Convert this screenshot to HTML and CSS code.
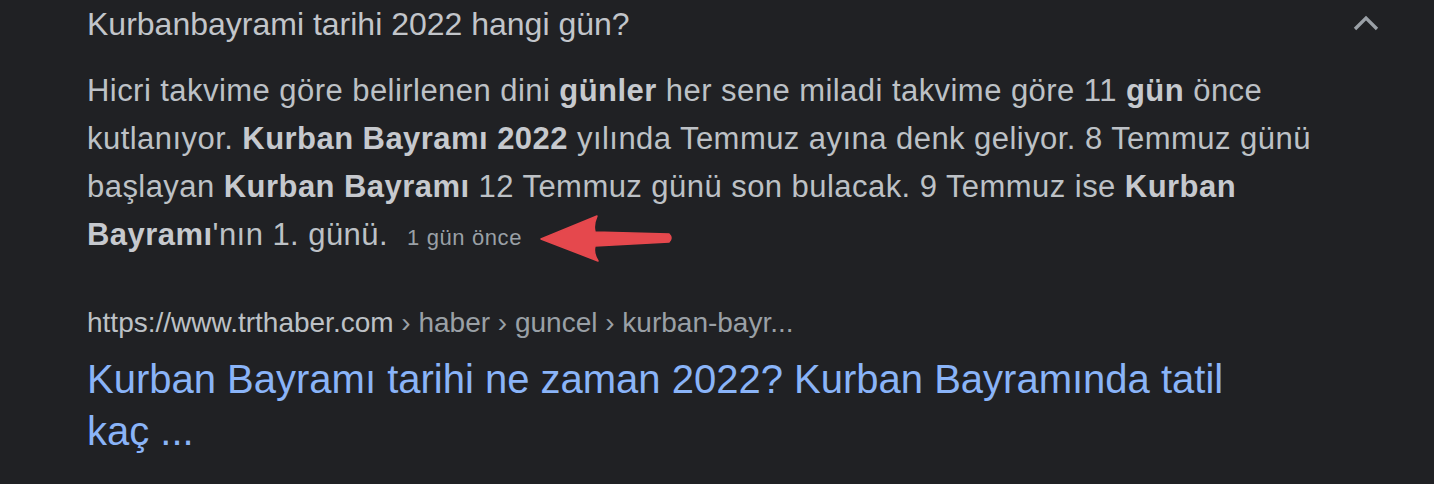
FILE: index.html
```html
<!DOCTYPE html>
<html lang="tr">
<head>
<meta charset="utf-8">
<title>Kurban Bayramı</title>
<link rel="stylesheet" href="styles.css">
</head>
<body>
<div class="page">
  <div class="faq-head">
    <div class="question">Kurbanbayrami tarihi 2022 hangi gün?</div>
    <svg class="chevron" width="28" height="18" viewBox="0 0 28 18"><path d="M3 14 L14 3 L25 14" fill="none" stroke="#9aa0a6" stroke-width="3.3"/></svg>
  </div>
  <p class="answer">Hicri takvime göre belirlenen dini <b>günler</b> her sene miladi takvime göre 11 <b>gün</b> önce kutlanıyor. <b>Kurban Bayramı 2022</b> yılında Temmuz ayına denk geliyor. 8 Temmuz günü başlayan <b>Kurban Bayramı</b> 12 Temmuz günü son bulacak. 9 Temmuz ise <b>Kurban Bayramı</b>'nın 1. günü. <span class="date">1 gün önce</span><svg class="arrow" width="135" height="50" viewBox="0 0 135 50"><path d="M3 26 L59 3 Q55 12 57 19 L131 21 Q135 25 131 29 L57 33 Q55 40 60 48 Z" fill="#e5484d" stroke="#e5484d" stroke-width="1.5" stroke-linejoin="round"/></svg></p>
  <div class="source">
    <div class="url"><span class="domain">https://www.trthaber.com</span> › haber › guncel › kurban-bayr...</div>
    <a class="title" href="#">Kurban Bayramı tarihi ne zaman 2022? Kurban Bayramında tatil kaç ...</a>
  </div>
</div>
</body>
</html>
```
FILE: styles.css
```css
html, body {
  margin: 0;
  padding: 0;
  background: #202124;
}
body {
  font-family: "Liberation Sans", Arial, sans-serif;
  color: #bdc1c6;
  width: 1434px;
  height: 484px;
  overflow: hidden;
}
.page {
  padding: 0 54px 0 87px;
}
.faq-head {
  display: flex;
  justify-content: space-between;
  align-items: center;
  height: 48px;
}
.question {
  font-size: 32px;
  line-height: 48px;
  color: #c2c5ca;
}
.chevron {
  display: block;
}
.answer {
  margin: 19px 0 0 0;
  font-size: 31px;
  letter-spacing: 0.45px;
  line-height: 48px;
  width: 1280px;
}
.answer b {
  font-weight: bold;
  color: #c6c9ce;
}
.date {
  font-size: 22px;
  letter-spacing: 0.6px;
  color: #9aa0a6;
  margin-left: 10px;
}
.arrow {
  display: inline-block;
  vertical-align: baseline;
  margin: 0 0 -18px 16px;
}
.source {
  margin-top: 43px;
}
.url {
  font-size: 28px;
  line-height: 36px;
  color: #9aa0a6;
}
.domain {
  color: #bdc1c6;
}
.title {
  display: block;
  margin-top: 12px;
  font-size: 40px;
  line-height: 52px;
  color: #8ab4f8;
  text-decoration: none;
  width: 1170px;
}
```
